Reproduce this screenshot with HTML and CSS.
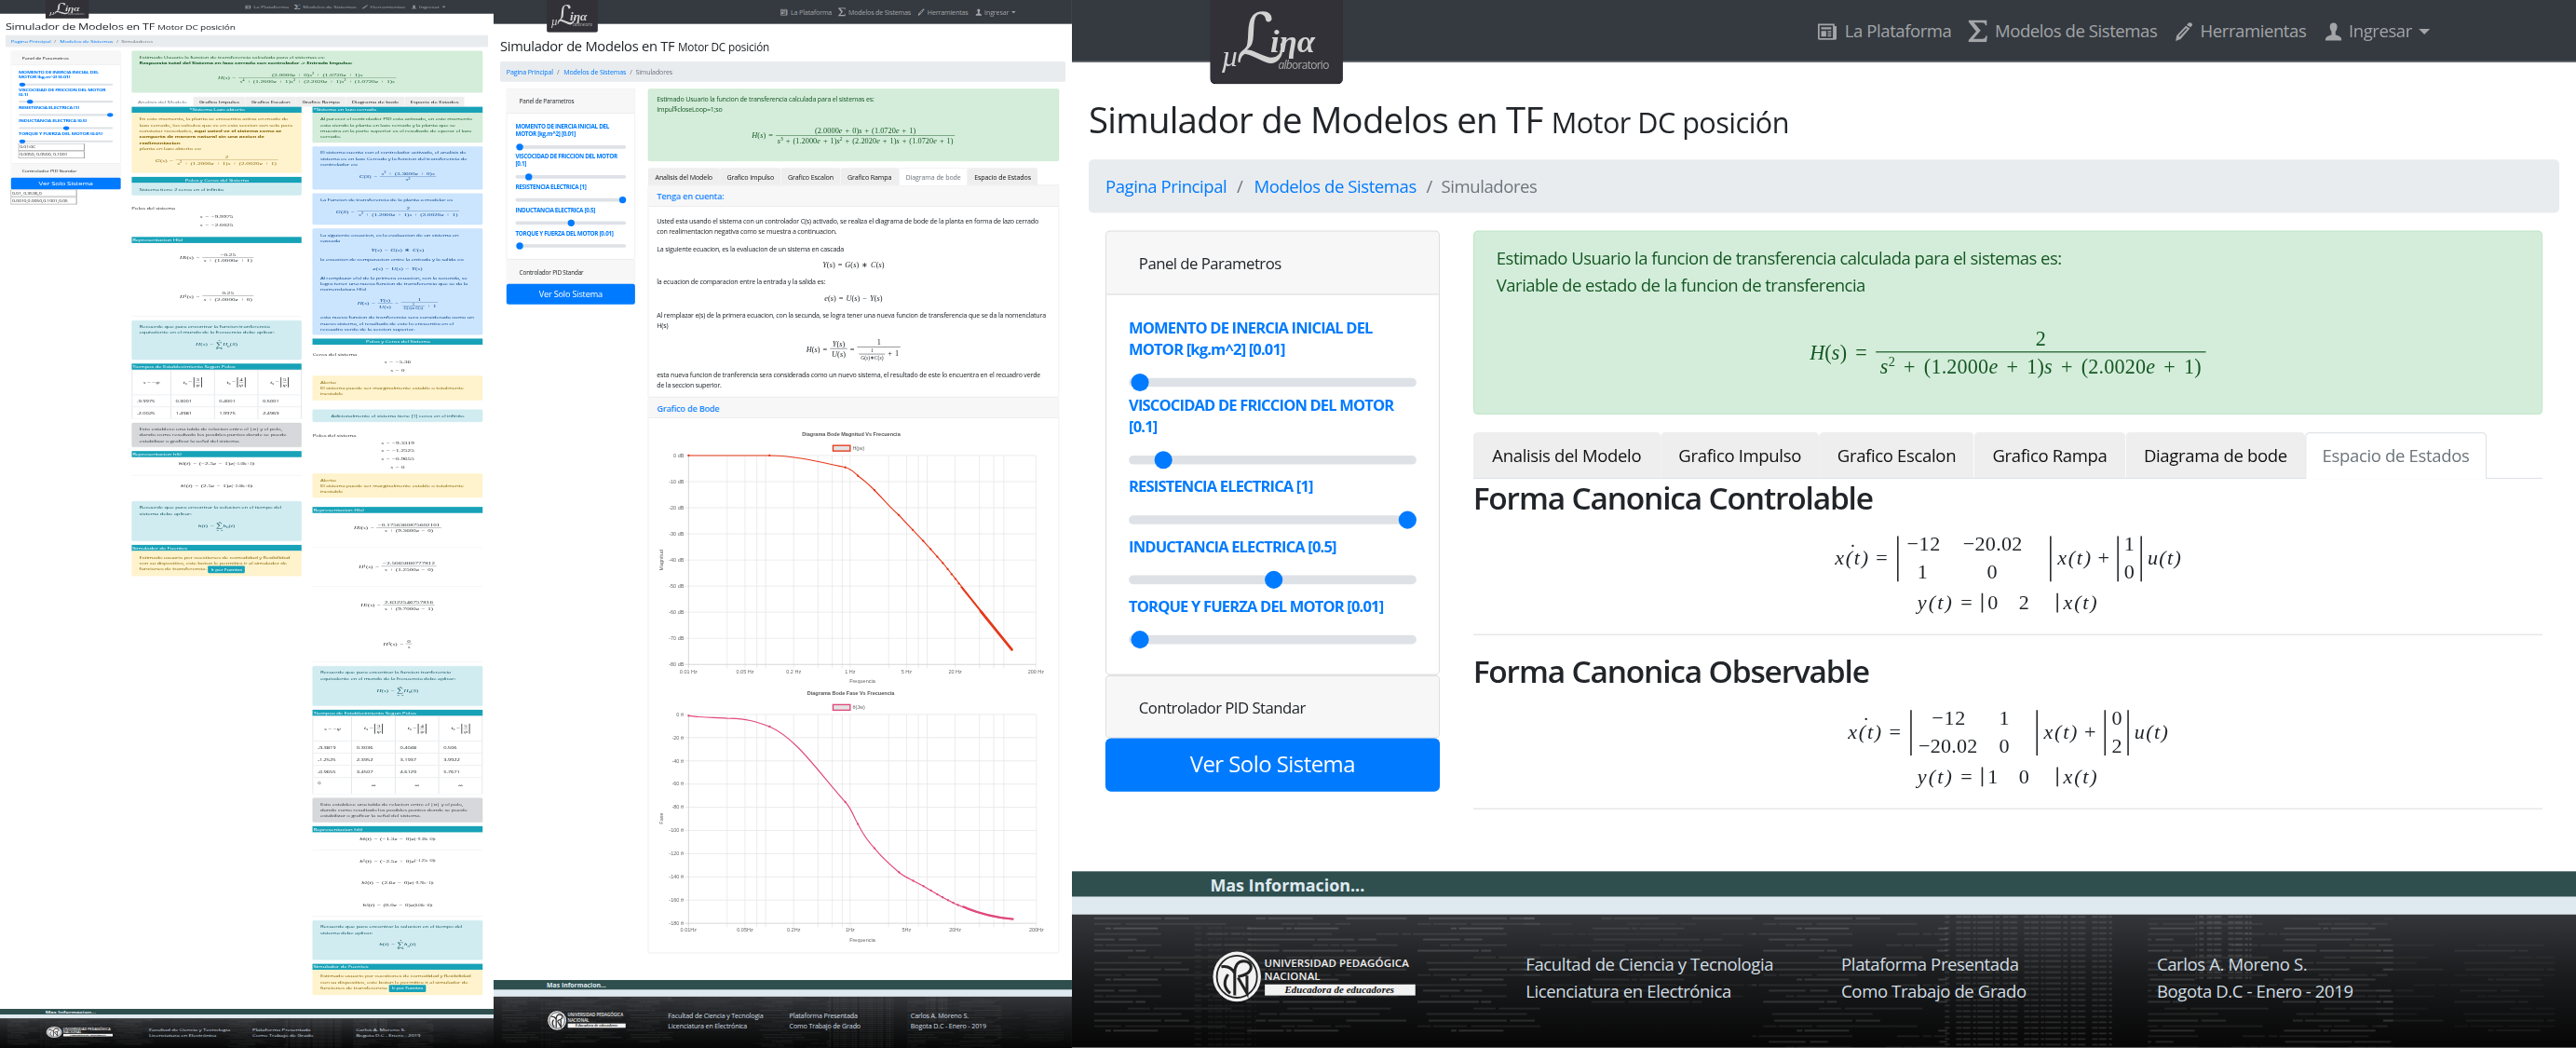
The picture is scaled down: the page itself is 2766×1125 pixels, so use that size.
FILE: index.html
```html
<!DOCTYPE html>
<html lang="es">
<head>
<meta charset="utf-8">
<title>Simulador de Modelos en TF</title>
<link rel="stylesheet" href="styles.css">
</head>
<body>
<svg class="defs" width="0" height="0" aria-hidden="true">
  <defs>
    <symbol id="i-news" viewBox="0 0 17 16"><path fill="currentColor" fill-rule="evenodd" d="M0 1h15v2h2v11a1.500 1.500 0 0 1-1.500 1.500h-14A1.500 1.500 0 0 1 0 14zM1.500 2.500v11.500h12v-11.500zM3 4h9v2H3zM3 7.500h4.500v5H3zM8.800 7.500h3.200v1.200H8.800zM8.800 9.500h3.200v1.200H8.800zM8.800 11.500h3.200v1H8.800z"/></symbol>
    <symbol id="i-sum" viewBox="0 0 17 20"><path fill="currentColor" d="M0 0h16.500v5h-1.200c-.4-2-1-2.600-3-2.600H5L11 9.500 4.500 17h8c2 0 2.700-.8 3.200-2.700h1.300L16.300 20H0v-1.600l7-8L0 1.600z"/></symbol>
    <symbol id="i-pencil" viewBox="0 0 17 19"><path fill="currentColor" d="M12.500 1.200c1.200-1.600 4.500-.6 4.300 1.600l-1.600 2.400-4-2.200zM10.200 3.800l4 2.400L5 17l-5 2 1-5.500zM10.400 6L3 14l1 .8 7.600-8z"/></symbol>
    <symbol id="i-user" viewBox="0 0 15 16"><path fill="currentColor" d="M7.500 0c2.300 0 3.300 1.500 3.300 3.700 0 1.800-.6 3-1.500 4.200v3.200c3 .8 5.400 1.600 5.700 4.900H0c.3-3.300 2.700-4.100 5.700-4.900V7.900C4.800 6.700 4.200 5.500 4.200 3.700 4.200 1.500 5.200 0 7.500 0z"/></symbol>
    <symbol id="seal" viewBox="0 0 44 46"><ellipse cx="22" cy="23" rx="21.500" ry="22.500" fill="#f2f2f2"/><ellipse cx="22" cy="23" rx="18" ry="19" fill="none" stroke="#222" stroke-width="1.500"/><path fill="none" stroke="#222" stroke-width="2.500" d="M8 14c6-1 10 2 12 6v20M20 20c0-7 3-11 8-11s8 4 6 8-6 5-11 6M23 24l8 14V22M14 21c-4 6-4 12 2 17"/></symbol>
    <pattern id="code" width="310" height="46" patternUnits="userSpaceOnUse">
      <g stroke="#fff" fill="none" stroke-width="1">
        <path opacity=".22" stroke-dasharray="70 3 22 60 9 2 40 30" d="M10 3.500H300"/>
        <path opacity=".12" stroke-dasharray="12 2 30 4 90 50" d="M0 8.500H250"/>
        <path opacity=".25" stroke-dasharray="5 2 40 80 33 2" d="M30 12.500H310"/>
        <path opacity=".13" stroke-dasharray="80 40 20 3 8 2" d="M0 17.500H310"/>
        <path opacity=".22" stroke-dasharray="33 4 16 100 60 2" d="M5 22.500H290"/>
        <path opacity=".14" stroke-dasharray="8 2 50 30 14 2" d="M20 27.500H310"/>
        <path opacity=".24" stroke-dasharray="55 2 9 90 30 3" d="M0 32.500H260"/>
        <path opacity=".14" stroke-dasharray="20 3 70 50" d="M50 38.500H310"/>
        <path opacity=".2" stroke-dasharray="90 70 16 2" d="M8 43.500H280"/>
      </g>
    </pattern>
    <pattern id="dense" width="61" height="5" patternUnits="userSpaceOnUse"><path stroke="#fff" opacity=".18" stroke-width="1.600" stroke-dasharray="5 1 7 2 3 1 14 2 4 3" d="M0 2H57"/></pattern>
    <linearGradient id="night" x1="0" y1="0" x2="0" y2="1"><stop offset="0" stop-color="#34363a"/><stop offset=".45" stop-color="#1b1c1e"/><stop offset="1" stop-color="#060606"/></linearGradient>
    <symbol id="backdrop" viewBox="0 0 1349 120" preserveAspectRatio="none">
      <rect width="1349" height="120" fill="url(#night)"/>
      <rect x="20" width="400" height="108" fill="url(#code)" opacity=".9"/>
      <rect x="110" y="10" width="55" height="110" fill="url(#dense)" opacity=".3"/>
      <rect x="405" width="210" height="80" fill="url(#code)" opacity=".5"/>
      <rect x="610" width="175" height="120" fill="url(#code)" opacity=".85"/>
      <rect x="783" width="150" height="120" fill="url(#dense)" opacity=".7"/>
      <rect x="965" y="4" width="220" height="116" fill="url(#code)" opacity=".8"/>
      <rect x="1008" width="50" height="60" fill="url(#dense)" opacity=".9"/>
      <rect x="1170" y="25" width="160" height="80" fill="url(#code)" opacity=".4"/>
    </symbol>
  </defs>
</svg>

<main class="board">

<!-- Analisis del modelo -->
<section class="shot shot-a"><div class="page">
  <header class="nav"><div class="logo"><span class="mu">µ</span><span class="ell">ℒ</span><span class="ina">iηα</span><span class="lab"><i>alb</i>oratorio</span></div>
    <nav class="links"><a class="l1"><svg><use href="#i-news"/></svg>La Plataforma</a><a class="l2"><svg><use href="#i-sum"/></svg>Modelos de Sistemas</a><a class="l3"><svg><use href="#i-pencil"/></svg>Herramientas</a><a class="l4"><svg><use href="#i-user"/></svg>Ingresar<b class="caret"></b></a></nav></header>
  <h2 class="title">Simulador de Modelos en TF <small>Motor DC posición</small></h2>
  <div class="crumbs"><a>Pagina Principal</a><i>/</i><a>Modelos de Sistemas</a><i>/</i><span>Simuladores</span></div>
  <div class="cols">
    <aside class="side">
      <div class="card"><div class="head">Panel de Parametros</div>
        <div class="params tall">
          <label>MOMENTO DE INERCIA INICIAL DEL<br>MOTOR [kg.m^2] [0.01]</label><div class="range first"><b style="left:0%"></b></div>
          <label>VISCOCIDAD DE FRICCION DEL MOTOR<br>[0.1]</label><div class="range"><b style="left:8.300%"></b></div>
          <label>RESISTENCIA ELECTRICA [1]</label><div class="range"><b style="left:93%"></b></div>
          <label>INDUCTANCIA ELECTRICA [0.5]</label><div class="range"><b style="left:46.500%"></b></div>
          <label>TORQUE Y FUERZA DEL MOTOR [0.01]</label><div class="range last"><b style="left:0%"></b></div>
          <div class="field">0.01:0C</div><div class="field">0.0050, 0.0500, 0.1001</div>
        </div></div>
      <div class="card"><div class="head pid">Controlador PID Standar</div></div>
      <div class="btn">Ver Solo Sistema</div>
      <div class="field">0.01, 0.3536,0</div><div class="field">0.0010,0.0050,0.1001,0.05</div>
    </aside>
    <div class="body">
      <div class="alert ok h170">Estimado Usuario la funcion de transferencia calculada para el sistemas es:<br><b>Respuesta total del Sistema en lazo cerrado con controlador -&gt; Entrada Impulso:</b>
        <div class="eq main"><i>H</i>(<i>s</i>) = <span class="frac"><span>(2.0000<i>e</i> + 0)<i>s</i><sup>2</sup> + (1.0720<i>e</i> + 1)<i>s</i></span><span><i>s</i><sup>4</sup> + (1.2000<i>e</i> + 1)<i>s</i><sup>3</sup> + (2.2020<i>e</i> + 1)<i>s</i><sup>2</sup> + (1.0720<i>e</i> + 1)<i>s</i></span></span></div></div>
      <div class="tabs ta"><span class="on">Analisis del Modelo</span><span>Grafico Impulso</span><span>Grafico Escalon</span><span>Grafico Rampa</span><span>Diagrama de bode</span><span>Espacio de Estados</span></div>
      <div class="split">
        <div class="half">
          <div class="bar c">*Sistema Lazo abierto</div>
          <div class="alert warn h245">En este momento, la planta se encuentra activa en modo de<br>lazo cerrado, los calculos que ve en esta seccion son solo para<br>constatar novedades, <b>aqui usted ve el sistema como se<br>comporta de manera natural sin una accion de<br>realimentacion</b><br>planta en lazo abierto es:
            <div class="eq e50"><i>G</i>(<i>s</i>) = <span class="frac"><span>2</span><span><i>s</i><sup>2</sup> + (1.2000<i>e</i> + 1)<i>s</i> + (2.0020<i>e</i> + 1)</span></span></div></div>
          <div class="bar c">Polos y Ceros del Sistema</div>
          <div class="alert info h50">Sistema tiene 2 ceros en el infinito</div>
          <p class="line g23">Polos del sistema</p>
          <div class="eq e33"><i>s</i> = −9.9975</div><div class="eq e33 b33"><i>s</i> = −2.0025</div>
          <div class="bar">Representacion H(s)</div>
          <div class="term clear"><div class="eq"><i>H</i><sub>0</sub>(<i>s</i>) = <span class="frac"><span>−0.25</span><span><i>s</i> + (1.0000<i>e</i> + 1)</span></span></div></div>
          <div class="term"><div class="eq"><i>H</i><sub>1</sub>(<i>s</i>) = <span class="frac"><span>0.25</span><span><i>s</i> + (2.0000<i>e</i> + 0)</span></span></div></div>
          <div class="alert info h160">Recuerde que para encontrar la funcion tranferencia<br>equivalente en el mundo de la frecuencia debe aplicar:
            <div class="eq e70"><i>H</i>(<i>s</i>) = <span class="sum"><small>2</small>∑<small>n=0</small></span><i>H<sub>n</sub></i>(<i>S</i>)</div></div>
          <div class="bar">Tiempos de Establecimiento Segun Polos</div>
          <table class="times">
            <tr class="th"><td><i>s</i> = −<i>ψ</i></td><td><i>t<sub>s</sub></i> = <em><span>3</span><span><i>ψ</i></span></em></td><td><i>t<sub>s</sub></i> = <em><span>4</span><span><i>ψ</i></span></em></td><td><i>t<sub>s</sub></i> = <em><span>5</span><span><i>ψ</i></span></em></td></tr>
            <tr><td>-9.9975</td><td>0.3001</td><td>0.4001</td><td>0.5001</td></tr>
            <tr><td>-2.0025</td><td>1.4981</td><td>1.9975</td><td>2.4969</td></tr>
          </table>
          <div class="alert grey h99">Esto establece una tabla de relacion entre el |σ| y el polo,<br>dando como resultado los posibles puntos donde se puede<br>estabilizar o graficar la señal del sistema.</div>
          <div class="bar">Representacion h(t)</div>
          <div class="term low"><div class="eq"><i>h</i><sub>0</sub>(<i>t</i>) = (−2.5<i>e</i> − 1)<i>e</i><sup>(−1.00e+1)t</sup></div></div>
          <div class="term low clear"><div class="eq"><i>h</i><sub>1</sub>(<i>t</i>) = (2.5<i>e</i> − 1)<i>e</i><sup>(−2.00e+0)t</sup></div></div>
          <div class="alert info h162">Recuerde que para encontrar la solucion en el tiempo del<br>sistema debe aplicar:
            <div class="eq e70"><i>h</i>(<i>t</i>) = <span class="sum"><small>2</small>∑<small>n=0</small></span><i>h<sub>n</sub></i>(<i>t</i>)</div></div>
          <div class="bar">Simulador de Fuentes</div>
          <div class="alert warn h102">Estimado usuario por cuestiones de comodidad y flexibilidad<br>con su dispositivo, este boton le permitira ir al simulador de<br>funciones de transferencia. <span class="mini">Ir por Fuentes</span></div>
        </div>
        <div class="half">
          <div class="bar">*Sistema en lazo cerrado</div>
          <div class="alert ok h121">Al parecer el controlador PID esta activado, en este momento<br>esta viendo la planta en lazo cerrado y la planta que se<br>muestra en la parte superior es el resultado de operar el lazo<br>cerrado.</div>
          <div class="alert pri h175">El sistema cuenta con el controlador activado, el analisis de<br>sistema es en lazo Cerrado y la funcion del transferencia de<br>controlador es:
            <div class="eq e70"><i>C</i>(<i>S</i>) = <span class="frac"><span><i>s</i><sup>2</sup> + (3.3600<i>e</i> + 0)<i>s</i></span><span><i>s</i><sup>2</sup></span></span></div></div>
          <div class="alert pri h128">La Funcion de transferencia de la planta a modelar es
            <div class="eq e70"><i>G</i>(<i>S</i>) = <span class="frac"><span>2</span><span><i>s</i><sup>2</sup> + (1.2000<i>e</i> + 1)<i>s</i> + (2.0020<i>e</i> + 1)</span></span></div></div>
          <div class="alert pri h433">La siguiente ecuacion, es la evaluacion de un sistema en<br>cascada
            <div class="eq e46"><i>Y</i>(<i>s</i>) = <i>G</i>(<i>s</i>) ∗ <i>C</i>(<i>s</i>)</div>
            la ecuacion de comparacion entre la entrada y la salida es:
            <div class="eq e46"><i>e</i>(<i>s</i>) = <i>U</i>(<i>s</i>) − <i>Y</i>(<i>s</i>)</div>
            Al remplazar e(s) de la primera ecuacion, con la secunda, se<br>logra tener una nueva funcion de transferencia que se da la<br>nomenclatura H(s)
            <div class="eq e90"><i>H</i>(<i>s</i>) = <span class="frac"><span><i>Y</i>(<i>s</i>)</span><span><i>U</i>(<i>s</i>)</span></span> = <span class="frac"><span>1</span><span><span class="frac s"><span>1</span><span><i>G</i>(<i>s</i>)∗<i>C</i>(<i>s</i>)</span></span> + 1</span></span></div>
            esta nueva funcion de tranferencia sera considerada como un<br>nuevo sistema, el resultado de este lo encuentra en el<br>recuadro verde de la seccion superior.</div>
          <div class="bar c">Polos y Ceros del Sistema</div>
          <p class="line g26">Ceros del sistema</p>
          <div class="eq e33 up"><i>s</i> = −5.36</div><div class="eq e33"><i>s</i> = 0</div>
          <div class="alert warn h100">Alerta:<br>El sistema puede ser marginalmente estable o totalmente<br>inestable</div>
          <div class="alert info h50 ctr g22">Adicionalmente el sistema tiene [1] ceros en el infinito</div>
          <p class="line g26">Polos del sistema</p>
          <div class="eq e33 up"><i>s</i> = −9.3319</div><div class="eq e33"><i>s</i> = −1.2525</div><div class="eq e33"><i>s</i> = −0.9655</div><div class="eq e33 b10"><i>s</i> = 0</div>
          <div class="alert warn h98">Alerta:<br>El sistema puede ser marginalmente estable o totalmente<br>inestable</div>
          <div class="bar g22">Representacion H(s)</div>
          <div class="term"><div class="eq"><i>H</i><sub>0</sub>(<i>s</i>) = <span class="frac"><span>−0.1756360875602101</span><span><i>s</i> + (9.3600<i>e</i> − 0)</span></span></div></div>
          <div class="term"><div class="eq"><i>H</i><sub>1</sub>(<i>s</i>) = <span class="frac"><span>−2.5065860777812</span><span><i>s</i> + (1.2500<i>e</i> − 0)</span></span></div></div>
          <div class="term clear"><div class="eq"><i>H</i><sub>2</sub>(<i>s</i>) = <span class="frac"><span>2.6322546757816</span><span><i>s</i> + (9.7000<i>e</i> − 1)</span></span></div></div>
          <div class="term short"><div class="eq"><i>H</i><sub>3</sub>(<i>s</i>) = <span class="frac"><span>0</span><span><i>s</i></span></span></div></div>
          <div class="alert info h162">Recuerde que para encontrar la funcion tranferencia<br>equivalente en el mundo de la frecuencia debe aplicar:
            <div class="eq e70"><i>H</i>(<i>s</i>) = <span class="sum"><small>4</small>∑<small>n=0</small></span><i>H<sub>n</sub></i>(<i>S</i>)</div></div>
          <div class="bar">Tiempos de Establecimiento Segun Polos</div>
          <table class="times">
            <tr class="th"><td><i>s</i> = −<i>ψ</i></td><td><i>t<sub>s</sub></i> = <em><span>3</span><span><i>ψ</i></span></em></td><td><i>t<sub>s</sub></i> = <em><span>4</span><span><i>ψ</i></span></em></td><td><i>t<sub>s</sub></i> = <em><span>5</span><span><i>ψ</i></span></em></td></tr>
            <tr><td>-9.3819</td><td>0.3036</td><td>0.4048</td><td>0.506</td></tr>
            <tr><td>-1.2525</td><td>2.3952</td><td>3.1937</td><td>3.9922</td></tr>
            <tr><td>-0.9655</td><td>3.4507</td><td>4.6129</td><td>5.7671</td></tr>
            <tr class="inf"><td>0</td><td>∞</td><td>∞</td><td>∞</td></tr>
          </table>
          <div class="alert grey h99">Esto establece una tabla de relacion entre el |σ| y el polo,<br>dando como resultado los posibles puntos donde se puede<br>estabilizar o graficar la señal del sistema.</div>
          <div class="bar">Representacion h(t)</div>
          <div class="term low"><div class="eq"><i>h</i><sub>0</sub>(<i>t</i>) = (−1.3<i>e</i> − 0)<i>e</i><sup>(−9.38e+0)t</sup></div></div>
          <div class="term low clear"><div class="eq"><i>h</i><sub>1</sub>(<i>t</i>) = (−2.5<i>e</i> + 0)<i>e</i><sup>(−1.25e+0)t</sup></div></div>
          <div class="term low clear"><div class="eq"><i>h</i><sub>2</sub>(<i>t</i>) = (2.6<i>e</i> − 0)<i>e</i><sup>(−9.70e−1)t</sup></div></div>
          <div class="term low"><div class="eq"><i>h</i><sub>3</sub>(<i>t</i>) = (0.0<i>e</i> − 0)<i>e</i><sup>(0.00e−0)t</sup></div></div>
          <div class="alert info h161">Recuerde que para encontrar la solucion en el tiempo del<br>sistema debe aplicar:
            <div class="eq e70"><i>h</i>(<i>t</i>) = <span class="sum"><small>4</small>∑<small>n=0</small></span><i>h<sub>n</sub></i>(<i>t</i>)</div></div>
          <div class="bar">Simulador de Fuentes</div>
          <div class="alert warn h102">Estimado usuario por cuestiones de comodidad y flexibilidad<br>con su dispositivo, este boton le permitira ir al simulador de<br>funciones de transferencia. <span class="mini">Ir por Fuentes</span></div>
        </div>
      </div>
    </div>
  </div>
  <footer><div class="more">Mas Informacion...</div><div class="strip"></div>
    <div class="foot"><svg class="bg"><use href="#backdrop"/></svg><div class="uni"><svg><use href="#seal"/></svg><div>UNIVERSIDAD PEDAGÓGICA<br>NACIONAL<em>Educadora de educadores</em></div></div><p>Facultad de Ciencia y Tecnologia<br>Licenciatura en Electrónica</p><p>Plataforma Presentada<br>Como Trabajo de Grado</p><p>Carlos A. Moreno S.<br>Bogota D.C - Enero - 2019</p></div></footer>
</div></section>

<!-- Diagrama de bode -->
<section class="shot shot-b"><div class="page">
  <header class="nav"><div class="logo"><span class="mu">µ</span><span class="ell">ℒ</span><span class="ina">iηα</span><span class="lab"><i>alb</i>oratorio</span></div>
    <nav class="links"><a class="l1"><svg><use href="#i-news"/></svg>La Plataforma</a><a class="l2"><svg><use href="#i-sum"/></svg>Modelos de Sistemas</a><a class="l3"><svg><use href="#i-pencil"/></svg>Herramientas</a><a class="l4"><svg><use href="#i-user"/></svg>Ingresar<b class="caret"></b></a></nav></header>
  <h2 class="title">Simulador de Modelos en TF <small>Motor DC posición</small></h2>
  <div class="crumbs"><a>Pagina Principal</a><i>/</i><a>Modelos de Sistemas</a><i>/</i><span>Simuladores</span></div>
  <div class="cols">
    <aside class="side">
      <div class="card"><div class="head">Panel de Parametros</div>
        <div class="params">
          <label>MOMENTO DE INERCIA INICIAL DEL<br>MOTOR [kg.m^2] [0.01]</label><div class="range first"><b style="left:0%"></b></div>
          <label>VISCOCIDAD DE FRICCION DEL MOTOR<br>[0.1]</label><div class="range"><b style="left:8.300%"></b></div>
          <label>RESISTENCIA ELECTRICA [1]</label><div class="range"><b style="left:93%"></b></div>
          <label>INDUCTANCIA ELECTRICA [0.5]</label><div class="range"><b style="left:46.500%"></b></div>
          <label>TORQUE Y FUERZA DEL MOTOR [0.01]</label><div class="range last"><b style="left:0%"></b></div>
        </div></div>
      <div class="card"><div class="head pid">Controlador PID Standar</div></div>
      <div class="btn">Ver Solo Sistema</div>
    </aside>
    <div class="body">
      <div class="alert ok h170">Estimado Usuario la funcion de transferencia calculada para el sistemas es:<br>Impul$closeLoop=1;so
        <div class="eq main"><i>H</i>(<i>s</i>) = <span class="frac"><span>(2.0000<i>e</i> + 0)<i>s</i> + (1.0720<i>e</i> + 1)</span><span><i>s</i><sup>3</sup> + (1.2000<i>e</i> + 1)<i>s</i><sup>2</sup> + (2.2020<i>e</i> + 1)<i>s</i> + (1.0720<i>e</i> + 1)</span></span></div></div>
      <div class="tabs tb"><span>Analisis del Modelo</span><span>Grafico Impulso</span><span>Grafico Escalon</span><span>Grafico Rampa</span><span class="on">Diagrama de bode</span><span>Espacio de Estados</span></div>
      <div class="card"><h5>Tenga en cuenta:</h5>
        <div class="note">
          <p>Usted esta usando el sistema con un controlador C(s) activado, se realiza el diagrama de bode de la planta en forma de lazo cerrado<br>con realimentacion negativa como se muestra a continuacion.</p>
          <p>La siguiente ecuacion, es la evaluacion de un sistema en cascada</p>
          <div class="eq e38"><i>Y</i>(<i>s</i>) = <i>G</i>(<i>s</i>) ∗ <i>C</i>(<i>s</i>)</div>
          <p>la ecuacion de comparacion entre la entrada y la salida es:</p>
          <div class="eq e38"><i>e</i>(<i>s</i>) = <i>U</i>(<i>s</i>) − <i>Y</i>(<i>s</i>)</div>
          <p>Al remplazar e(s) de la primera ecuacion, con la secunda, se logra tener una nueva funcion de transferencia que se da la nomenclatura<br>H(s)</p>
          <div class="eq e76"><i>H</i>(<i>s</i>) = <span class="frac"><span><i>Y</i>(<i>s</i>)</span><span><i>U</i>(<i>s</i>)</span></span> = <span class="frac"><span>1</span><span><span class="frac s"><span>1</span><span><i>G</i>(<i>s</i>)∗<i>C</i>(<i>s</i>)</span></span> + 1</span></span></div>
          <p>esta nueva funcion de tranferencia sera considerada como un nuevo sistema, el resultado de este lo encuentra en el recuadro verde<br>de la seccion superior.</p>
        </div></div>
      <div class="card"><h5>Grafico de Bode</h5>
        <svg class="chart" viewBox="360.750 980 957.250 1252">
          <g class="grid">
            <path d="M544.500 1066.600V1566M586.300 1066.600V1566M613.800 1066.600V1566M634.400 1066.600V1566M699.700 1066.600V1566M756.500 1066.600V1566M789.700 1066.600V1566M813.200 1066.600V1566M831.500 1066.600V1566M921.300 1066.600V1566M963.100 1066.600V1566M990.700 1066.600V1566M1011.200 1066.600V1566M1076.500 1066.600V1566M1133.200 1066.600V1566M1166.400 1066.600V1566M1190 1066.600V1566M1265 1066.600V1566"/>
            <path d="M446 1066.600H1265M446 1127.900H1265M446 1189.100H1265M446 1250.400H1265M446 1311.700H1265M446 1372.900H1265M446 1434.200H1265M446 1495.400H1265"/>
            <path class="axis" d="M454.600 1066.600V1566M446 1556.700H1265"/>
            <path d="M544.500 1674V2173M586.300 1674V2173M613.800 1674V2173M634.400 1674V2173M699.700 1674V2173M756.500 1674V2173M789.700 1674V2173M813.200 1674V2173M831.500 1674V2173M921.300 1674V2173M963.100 1674V2173M990.700 1674V2173M1011.200 1674V2173M1076.500 1674V2173M1133.200 1674V2173M1166.400 1674V2173M1190 1674V2173M1266 1674V2173"/>
            <path d="M446 1674H1266M446 1728.400H1266M446 1782.900H1266M446 1837.300H1266M446 1891.800H1266M446 1946.200H1266M446 2000.700H1266M446 2055.100H1266M446 2109.600H1266"/>
            <path class="axis" d="M454.600 1674V2173M446 2164H1266"/>
          </g>
          <g class="ttl"><text x="834" y="1021">Diagrama Bode Magnitud Vs Frecuencia</text><text x="833" y="1628">Diagrama Bode Fase Vs Frecuencia</text></g>
          <rect class="key" x="791.500" y="1043" width="40" height="13" stroke="#e5391b"/><text x="837" y="1054">H(jw)</text>
          <rect class="key" x="791.500" y="1651" width="40" height="13" stroke="#e0497c"/><text x="837" y="1662">θ(Jw)</text>
          <g class="yl"><text x="444" y="1070.600">0 dB</text><text x="444" y="1132">-10 dB</text><text x="444" y="1193">-20 dB</text><text x="444" y="1254.500">-30 dB</text><text x="444" y="1315.700">-40 dB</text><text x="444" y="1377">-50 dB</text><text x="444" y="1438">-60 dB</text><text x="444" y="1499.500">-70 dB</text><text x="444" y="1560.700">-80 dB</text>
          <text x="443" y="1678">0 θ</text><text x="443" y="1732.400">-20 θ</text><text x="443" y="1787">-40 θ</text><text x="443" y="1841.300">-60 θ</text><text x="443" y="1895.800">-80 θ</text><text x="443" y="1950">-100 θ</text><text x="443" y="2004.700">-120 θ</text><text x="443" y="2059">-140 θ</text><text x="443" y="2113.600">-160 θ</text><text x="443" y="2168">-180 θ</text></g>
          <g class="xl"><text x="454.600" y="1577">0.01 Hz</text><text x="586.300" y="1577">0.05 Hz</text><text x="699.700" y="1577">0.2 Hz</text><text x="831.500" y="1577">1 Hz</text><text x="963" y="1577">5 Hz</text><text x="1076.500" y="1577">20 Hz</text><text x="1265" y="1577">200 Hz</text><text x="860" y="1599">Frequencia</text>
          <text x="454.600" y="2183">0.01Hz</text><text x="586.300" y="2183">0.05Hz</text><text x="699.700" y="2183">0.2Hz</text><text x="831.500" y="2183">1Hz</text><text x="963" y="2183">5Hz</text><text x="1076.500" y="2183">20Hz</text><text x="1266" y="2183">200Hz</text><text x="860" y="2207">Frequencia</text>
          <text transform="translate(396 1312) rotate(-90)">Magnitud</text><text transform="translate(396 1918) rotate(-90)">Fase</text></g>
          <g fill="none" stroke="#e5391b" stroke-width="2.500"><path d="M454.600 1066.600H643C705 1067 760 1082 820 1094.500C835 1098 842 1108 849.500 1114C864 1125 876 1135 888.400 1148C907 1167 925 1189 944.700 1206L977.600 1241 1001.900 1267 1019 1286 1034.800 1304 1047.700 1318.500 1208.800 1522"/><path stroke-width="6" stroke-linecap="round" d="M1136 1432L1208.800 1522"/><path stroke-width="4" d="M1090 1374L1150 1449"/>
          <path stroke-width="5" stroke-linecap="round" d="M454.600 1066.600h0M643.400 1066.600h0M820 1094.500h0M849.500 1114h0M888.400 1148h0M944.700 1206h0M977.600 1241h0M1001.900 1267h0M1019 1286h0M1034.800 1304h0M1047.700 1319h0M1059 1333h0M1068 1345h0M1077 1356h0M1085 1367h0"/></g>
          <g fill="none" stroke="#e0497c" stroke-width="2.500"><path d="M454.600 1677C480 1681 510 1681 545 1683C590 1684 610 1690 643.400 1702.500C705 1729 755 1806 820 1879.500C834 1893 840 1915 849.500 1931C861 1954 873 1972 888.400 1988C905 2009 924 2026 945.500 2044.500C957 2054 967 2058 978.500 2064L1002.700 2077 1020 2087 1047 2103C1085 2125 1145 2149 1211 2154"/><path stroke-width="5" stroke-linecap="round" d="M1095 2125C1130 2140 1165 2150 1211 2154"/>
          <path stroke-width="5" stroke-linecap="round" d="M454.600 1677h0M643.400 1702.500h0M820 1879.500h0M849.500 1931h0M888.400 1988h0M945.500 2044.500h0M978.500 2064h0M1002.700 2077h0M1020 2087h0M1034.800 2096h0M1047 2103h0M1060 2110h0M1072 2116h0M1083 2121h0"/></g>
        </svg></div>
    </div>
  </div>
  <footer><div class="more">Mas Informacion...</div><div class="strip"></div>
    <div class="foot"><svg class="bg"><use href="#backdrop"/></svg><div class="uni"><svg><use href="#seal"/></svg><div>UNIVERSIDAD PEDAGÓGICA<br>NACIONAL<em>Educadora de educadores</em></div></div><p>Facultad de Ciencia y Tecnologia<br>Licenciatura en Electrónica</p><p>Plataforma Presentada<br>Como Trabajo de Grado</p><p>Carlos A. Moreno S.<br>Bogota D.C - Enero - 2019</p></div></footer>
</div></section>

<!-- Espacio de estados -->
<section class="shot shot-c"><div class="page">
  <header class="nav"><div class="logo"><span class="mu">µ</span><span class="ell">ℒ</span><span class="ina">iηα</span><span class="lab"><i>alb</i>oratorio</span></div>
    <nav class="links"><a class="l1"><svg><use href="#i-news"/></svg>La Plataforma</a><a class="l2"><svg><use href="#i-sum"/></svg>Modelos de Sistemas</a><a class="l3"><svg><use href="#i-pencil"/></svg>Herramientas</a><a class="l4"><svg><use href="#i-user"/></svg>Ingresar<b class="caret"></b></a></nav></header>
  <h2 class="title">Simulador de Modelos en TF <small>Motor DC posición</small></h2>
  <div class="crumbs"><a>Pagina Principal</a><i>/</i><a>Modelos de Sistemas</a><i>/</i><span>Simuladores</span></div>
  <div class="cols">
    <aside class="side">
      <div class="card"><div class="head">Panel de Parametros</div>
        <div class="params">
          <label>MOMENTO DE INERCIA INICIAL DEL<br>MOTOR [kg.m^2] [0.01]</label><div class="range first"><b style="left:0%"></b></div>
          <label>VISCOCIDAD DE FRICCION DEL MOTOR<br>[0.1]</label><div class="range"><b style="left:8.300%"></b></div>
          <label>RESISTENCIA ELECTRICA [1]</label><div class="range"><b style="left:93%"></b></div>
          <label>INDUCTANCIA ELECTRICA [0.5]</label><div class="range"><b style="left:46.500%"></b></div>
          <label>TORQUE Y FUERZA DEL MOTOR [0.01]</label><div class="range last"><b style="left:0%"></b></div>
        </div></div>
      <div class="card"><div class="head pid">Controlador PID Standar</div></div>
      <div class="btn">Ver Solo Sistema</div>
    </aside>
    <div class="body">
      <div class="alert ok h167">Estimado Usuario la funcion de transferencia calculada para el sistemas es:<br>Variable de estado de la funcion de transferencia
        <div class="eq main"><i>H</i>(<i>s</i>) = <span class="frac"><span>2</span><span><i>s</i><sup>2</sup> + (1.2000<i>e</i> + 1)<i>s</i> + (2.0020<i>e</i> + 1)</span></span></div></div>
      <div class="tabs tc"><span>Analisis del Modelo</span><span>Grafico Impulso</span><span>Grafico Escalon</span><span>Grafico Rampa</span><span>Diagrama de bode</span><span class="on">Espacio de Estados</span></div>
      <h3>Forma Canonica Controlable</h3>
      <svg class="state" viewBox="359.750 474 959.250 98">
        <g class="it"><text x="684" y="509.500" textLength="30">x(t)</text><text x="883.600" y="509.500" textLength="30">x(t)</text><text x="964.400" y="509.500" textLength="30">u(t)</text><text x="758" y="549.500" textLength="31">y(t)</text><text x="889" y="549.500" textLength="30">x(t)</text></g>
        <text x="697" y="503">˙</text>
        <g class="mid"><text x="726" y="509.500">=</text><text x="925" y="509.500">+</text><text x="763.500" y="496.700" textLength="30">−12</text><text x="825.500" y="496.700" textLength="53">−20.02</text><text x="762.700" y="521.900">1</text><text x="825" y="521.900">0</text><text x="948" y="496.700">1</text><text x="948" y="521.900">0</text><text x="802" y="549.500">=</text><text x="825.700" y="549.500">0</text><text x="853.600" y="549.500">2</text></g>
        <path d="M740.500 483.600v41M877.500 483.600v41M937.900 483.600v41M958.800 483.600v41M816.200 535v17.500M883.600 535v17.500"/>
      </svg>
      <hr>
      <h3>Forma Canonica Observable</h3>
      <svg class="state" viewBox="359.750 474 959.250 98">
        <g class="it"><text x="695.800" y="509.500" textLength="30">x(t)</text><text x="871.400" y="509.500" textLength="30">x(t)</text><text x="952.700" y="509.500" textLength="30">u(t)</text><text x="758" y="549.500" textLength="31">y(t)</text><text x="889" y="549.500" textLength="30">x(t)</text></g>
        <text x="709" y="503">˙</text>
        <g class="mid"><text x="738" y="509.500">=</text><text x="913" y="509.500">+</text><text x="786" y="496.700" textLength="30">−12</text><text x="785.500" y="521.900" textLength="53">−20.02</text><text x="836" y="496.700">1</text><text x="836" y="521.900">0</text><text x="937" y="496.700">0</text><text x="937" y="521.900">2</text><text x="802" y="549.500">=</text><text x="825.700" y="549.500">1</text><text x="853.600" y="549.500">0</text></g>
        <path d="M752.300 483.600v41M865.300 483.600v41M926.300 483.600v41M947 483.600v41M816.200 535v17.500M883.600 535v17.500"/>
      </svg>
      <hr>
    </div>
  </div>
  <footer><div class="more">Mas Informacion...</div><div class="strip"></div>
    <div class="foot"><svg class="bg"><use href="#backdrop"/></svg><div class="uni"><svg><use href="#seal"/></svg><div>UNIVERSIDAD PEDAGÓGICA<br>NACIONAL<em>Educadora de educadores</em></div></div><p>Facultad de Ciencia y Tecnologia<br>Licenciatura en Electrónica</p><p>Plataforma Presentada<br>Como Trabajo de Grado</p><p>Carlos A. Moreno S.<br>Bogota D.C - Enero - 2019</p></div></footer>
</div></section>

</main>
</body>
</html>
```
FILE: styles.css
```css
* { box-sizing: border-box; }
body { margin: 0; background: #fff; color: #212529; font: 15.500px/24px "Open Sans", "Noto Sans", sans-serif; }
.defs { position: absolute; }
p, h2, h3, h5 { margin: 0; font-weight: 400; }

/* three boards side by side, each a full page drawn at its own scale */
.board { display: flex; width: 2766px; height: 1125px; overflow: hidden; }
.shot { flex: none; height: 1125px; overflow: hidden; }
.shot-a { width: 530px; }
.shot-b { width: 621px; }
.shot-c { width: 1615px; }
.page { width: 1349px; display: flex; flex-direction: column; transform-origin: 0 0; white-space: nowrap; letter-spacing: -.37px; }
.shot-a .page { height: 4277.600px; transform: scale(.3929, .263); }
.shot-b .page { height: 2458.500px; transform: scale(.4603, .4576); }
.shot-c .page { height: 945.400px; transform: scale(1.1972, 1.19); }

/* navbar */
.nav { display: flex; align-items: flex-start; justify-content: space-between; height: 56px; flex: none; padding: 0 131px 0 124px; background: #343a40; border-bottom: 1px solid #6a6e74; }
.logo { position: relative; width: 118.500px; height: 75.600px; border-radius: 0 0 5px 5px; background: #323137; border-bottom: 1px solid #1c1b20; color: #d2d2d2; font-family: "Liberation Serif", serif; font-style: italic; letter-spacing: 0; }
.logo span { position: absolute; line-height: 1; }
.mu { left: 10px; top: 38px; font-size: 27px; }
.ell { left: 23px; top: 4px; font-size: 62px; font-style: normal; font-family: "DejaVu Serif", "DejaVu Sans", serif; }
.ina { left: 54px; top: 23px; font-size: 29px; font-weight: 700; }
.logo .lab { left: 61px; top: 53px; font: normal 10px/1 "Open Sans", sans-serif; letter-spacing: -.6px; color: #aaa; }
.links { display: flex; height: 56px; align-items: center; color: #a3a5a8; }
.links a { display: flex; align-items: center; justify-content: space-between; height: 24px; }
.links svg { width: 17px; height: 17px; }
.l1 { width: 119.500px; margin-right: 15.500px; }
.l2 { width: 169px; margin-right: 16px; }
.l2 svg { height: 20px; }
.l3 { width: 117.600px; margin-right: 17px; }
.l4 { width: 94px; }
.l4 svg { width: 15px; }
.caret { border: 5px solid transparent; border-top-color: currentColor; border-bottom: 0; }

/* heading and breadcrumb */
.title { flex: none; height: 87.700px; padding: 33px 0 0 15px; font-size: 32px; line-height: 38px; letter-spacing: -.62px; }
.title small { font-size: 25.600px; letter-spacing: -.45px; }
.crumbs { flex: none; display: flex; align-items: center; height: 48px; margin: 0 15px 16px; padding: 0 15px; border-radius: 4px; background: #e9ecef; color: #6c757d; }
.crumbs i { font-style: normal; margin: 0 8px 0 9px; }
.crumbs i + a { margin-left: 2px; }
.crumbs a { color: #007bff; }

.cols { display: flex; padding: 0 30px; gap: 30px; }
.side { width: 299.750px; flex: none; }
.body { flex: 1; min-width: 0; }

/* parameter panel */
.card { border: 1px solid #dfdfdf; border-radius: 4px; background: #fff; overflow: hidden; }
.head { height: 57px; padding: 17px 0 0 29px; font-size: 14px; line-height: 24px; letter-spacing: -.45px; background: #f7f7f7; border-bottom: 1px solid #dfdfdf; }
.head.pid { height: 55px; border: 0; }
.params { height: 342.500px; padding: 20px 20px 0; }
.params.tall { height: 401px; }
.params label { display: block; height: auto; color: #007bff; font-weight: 700; font-size: 13.800px; line-height: 19px; letter-spacing: -.7px; }
.range { position: relative; height: 8px; margin: 17px 0 10px; border-radius: 4px; background: #dee2e6; }
.range.first { margin-bottom: 7px; }
.range b { position: absolute; top: -4px; width: 16px; height: 16px; border-radius: 50%; background: #007bff; margin-left: 2px; }
.range.last { margin-bottom: 5px; }
.field { width: 181px; height: 29px; margin: 0 0 2px -1px; border: 2px solid #888; border-left-color: #bbb; border-top-color: #bbb; font-size: 13.300px; line-height: 25px; padding-left: 2px; overflow: hidden; }
.btn { height: 48px; border-radius: 5px; background: #007bff; color: #fff; font-size: 20px; line-height: 48px; text-align: center; letter-spacing: -.45px; }
.shot-a .btn { margin-bottom: 1px; }

/* alerts */
.alert { padding: 12px 20px; border: 1px solid; border-radius: 4px; margin-bottom: 16px; letter-spacing: -.46px; overflow: hidden; }
.ok { color: #155724; background: #d4edda; border-color: #c3e6cb; }
.warn { color: #856404; background: #fff3cd; border-color: #ffeeba; }
.info { color: #0c5460; background: #d1ecf1; border-color: #bee5eb; }
.pri { color: #004085; background: #cce5ff; border-color: #b8daff; }
.grey { color: #383d41; background: #d6d8db; border-color: #c6c8ca; }
.ctr { text-align: center; }
.h50 { height: 50px; } .h98 { height: 98px; } .h99 { height: 99px; } .h100 { height: 100px; }
.h102 { height: 102px; } .h121 { height: 121px; } .h128 { height: 128px; } .h160 { height: 160px; }
.h161 { height: 161px; } .h162 { height: 162px; } .h167 { height: 166.700px; } .h170 { height: 170px; }
.h175 { height: 175px; } .h245 { height: 245px; } .h433 { height: 433px; }
.g22 { margin-top: 38px; }
.mini { display: inline-block; height: 29px; padding: 0 8px; border-radius: 3px; background: #17a2b8; color: #fff; font-size: 14px; line-height: 28px; vertical-align: middle; }

/* equations */
.eq { display: flex; align-items: center; justify-content: center; font: 18px/22px "Liberation Serif", serif; letter-spacing: .1px; word-spacing: 1.800px; white-space: pre; }
.shot-c .eq { font-size: 18.500px; word-spacing: 2.800px; letter-spacing: .15px; }
.eq sup { font-size: 12px; line-height: 0; }
.eq sub { font-size: 12px; line-height: 0; }
.frac { display: inline-flex; flex-direction: column; align-items: center; vertical-align: middle; }
.frac > span { padding: 0 4px; }
.frac > span:last-child { border-top: 1.500px solid; align-self: stretch; text-align: center; padding-top: 2px; }
.frac.s { font-size: 12px; line-height: 13px; }
.main { height: 92px; padding-top: 7px; }
.sum { display: inline-flex; flex-direction: column; align-items: center; font-size: 26px; line-height: 22px; }
.sum small { font-size: 11px; line-height: 12px; }
.e33 { height: 33.200px; } .e38 { height: 38px; margin-top: -9px; margin-bottom: 9px; }
.e46 { height: 52px; } .e50 { height: 72px; } .e70 { height: 75px; } .e76 { height: 76px; margin: -10px 0 9px; } .e90 { height: 90px; }
.up { margin-top: 3px; }
.b33 { margin-bottom: 32px; } .b10 { margin-bottom: 10px; }

/* tabs */
.tabs { display: flex; height: 41.500px; border-bottom: 1px solid #dee2e6; line-height: 40px; text-align: center; letter-spacing: -.3px; }
.tabs span { border: 1px solid #eee; border-bottom: 0; border-radius: 4px 4px 0 0; background: #eee; color: #111; height: 40.500px; }
.tabs .on { background: #fff; border-color: #dee2e6; color: #6c757d; height: 41.500px; }
.tabs span:nth-child(1) { width: 168px; } .tabs span:nth-child(2) { width: 142.600px; }
.tabs span:nth-child(3) { width: 138.600px; } .tabs span:nth-child(4) { width: 136.200px; }
.tabs span:nth-child(5) { width: 161px; } .tabs span:nth-child(6) { width: 162.600px; }

/* model analysis columns */
.split { display: flex; gap: 30px; padding-top: 1px; }
.half { flex: 1; min-width: 0; }
.bar { height: 25px; padding-left: 2px; background: #17a2b8; color: #fff; }
.bar.c { text-align: center; }
.line { height: 24px; margin-bottom: 8px; }
.g23 { margin-top: 39px; }
.g26 { margin-top: 26px; margin-bottom: 0; }
.half .h100 { margin-top: 7px; }
.half .h100 + .h50 { margin-bottom: 42px; }
.term { height: 142px; margin-bottom: 16px; padding-top: 36px; border-bottom: 1px solid #dcdcdc; }
.term.short { height: 135px; }
.term .eq { height: 48px; }
.term.low { height: 74px; padding-top: 3px; }
.term.clear { border-color: transparent; }
.times { width: 100%; border-collapse: collapse; margin-bottom: 16px; table-layout: fixed; font-size: 15px; }
.times td { height: 49px; border: 1px solid #dee2e6; border-width: 2px 2px 1px; padding: 0 12px; }
.times td:first-child { width: 106px; }
.times .th td { height: 102px; font: 18px "Liberation Serif", serif; text-align: center; }
.times em { display: inline-flex; flex-direction: column; vertical-align: middle; border: solid; border-width: 0 2px; padding: 0 4px; font-style: normal; line-height: 20px; }
.times em span + span { border-top: 1px solid; }
.times .inf td { height: 68px; text-align: center; font-size: 18px; }
.times .inf td:first-child { text-align: left; vertical-align: top; padding-top: 12px; font-size: 15px; }

/* bode cards */
h5 { height: 48.500px; padding: 13px 20px 0; font-size: 20px; line-height: 24px; font-weight: 600; letter-spacing: -.5px; color: #007bff; opacity: .9; background: #f7f7f7; border-bottom: 1px solid #dfdfdf; }
.note { height: 446px; padding: 22px 20px 0; letter-spacing: -.46px; }
.note p { margin-bottom: 16px; }
.chart { display: block; width: 957.250px; height: 1254px; font: 12px "Liberation Sans", sans-serif; letter-spacing: 0; fill: #666; }
.grid { fill: none; stroke: #e3e3e3; stroke-width: 1.500; }
.axis { stroke: #c4c4c4; }
.ttl { font-weight: 700; text-anchor: middle; fill: #555; }
.key { fill: #e3e3e3; stroke-width: 3; }
.yl { text-anchor: end; }
.xl { text-anchor: middle; }

/* state space */
h3 { height: 42.300px; font-size: 28px; line-height: 34px; font-weight: 600; letter-spacing: -1px; }
.state { display: block; width: 959.250px; height: 98px; font: 18.500px "Liberation Serif", serif; letter-spacing: 0; fill: #212529; }
.state path { stroke: #212529; stroke-width: 1.300; }
.it { font-style: italic; }
.mid { text-anchor: middle; }
hr { height: 1px; margin: 0 0 15.200px; border: 0; background: #e2e2e2; }

/* footer */
footer { flex: none; margin-top: auto; }
.more { height: 23.500px; padding-left: 124px; background: #2f4f4f; color: #dfeaf0; font-size: 15px; line-height: 24px; font-weight: 700; letter-spacing: -.05px; }
.strip { height: 16px; background: #deeaf0; }
.foot { position: relative; display: flex; height: 120.300px; padding: 33px 0 0 125.500px; color: #d0dde2; background: #111; overflow: hidden; }
.bg { position: absolute; left: 0; top: 0; width: 1349px; height: 120.300px; }
.foot p { position: relative; width: 283px; padding-top: 0; letter-spacing: -.33px; }
.uni { position: relative; display: flex; gap: 3px; width: 281.500px; color: #eee; font: 9.600px/12px "Open Sans", sans-serif; font-weight: 600; letter-spacing: .1px; }
.uni svg { width: 44px; height: 46px; }
.uni div { padding-top: 5px; }
.uni em { display: block; width: 135px; height: 10px; margin-top: 1px; background: #f2f2f2; color: #111; font: italic 700 9px/10px "Liberation Serif", serif; text-align: center; }
```
